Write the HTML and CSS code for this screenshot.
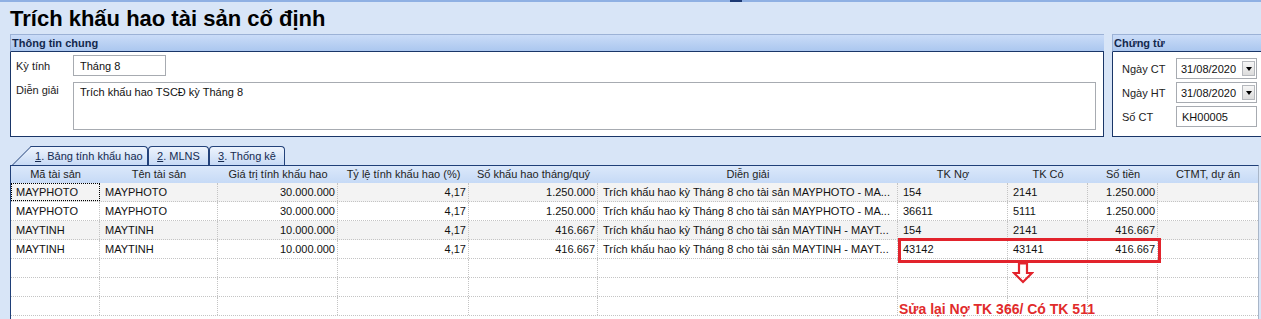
FILE: index.html
```html
<!DOCTYPE html>
<html lang="vi">
<head>
    <meta charset="UTF-8">
    <meta name="viewport" content="width=device-width, initial-scale=1.0">
    <title>Trích khấu hao tài sản cố định</title>
    <link rel="stylesheet" href="styles.css">
</head>
<body>
    <div class="topline"><span class="topmark"></span></div>
    <h1 class="title">Trích khấu hao tài sản cố định</h1>

    <div class="panels">
        <div class="panel panel-main">
            <div class="panel-head">Thông tin chung</div>
            <div class="panel-body">
                <div class="field">
                    <label>Kỳ tính</label>
                    <input class="input input-short" type="text" value="Tháng 8">
                </div>
                <div class="field field-top">
                    <label>Diễn giải</label>
                    <textarea class="input memo">Trích khấu hao TSCĐ kỳ Tháng 8</textarea>
                </div>
            </div>
        </div>

        <div class="panel panel-side">
            <div class="panel-head">Chứng từ</div>
            <div class="panel-body">
                <div class="field">
                    <label>Ngày CT</label>
                    <div class="combo">
                        <input class="bare" type="text" value="31/08/2020">
                        <span class="drop"><span class="caret"></span></span>
                    </div>
                </div>
                <div class="field">
                    <label>Ngày HT</label>
                    <div class="combo">
                        <input class="bare" type="text" value="31/08/2020">
                        <span class="drop"><span class="caret"></span></span>
                    </div>
                </div>
                <div class="field">
                    <label>Số CT</label>
                    <input class="input input-side" type="text" value="KH00005">
                </div>
            </div>
        </div>
    </div>

    <div class="tabs">
        <div class="tab tab-first"><u>1</u>. Bảng tính khẩu hao</div>
        <div class="tab tab-mlns"><u>2</u>. MLNS</div>
        <div class="tab tab-stats"><u>3</u>. Thống kê</div>
    </div>

    <div class="tabpage">
        <div class="grid-head">
            <div>Mã tài sản</div>
            <div>Tên tài sản</div>
            <div>Giá trị tính khấu hao</div>
            <div>Tỷ lệ tính khấu hao (%)</div>
            <div>Số khấu hao tháng/quý</div>
            <div>Diễn giải</div>
            <div>TK Nợ</div>
            <div>TK Có</div>
            <div>Số tiền</div>
            <div>CTMT, dự án</div>
        </div>
        <div class="grid-row alt">
            <div class="focus">MAYPHOTO</div>
            <div>MAYPHOTO</div>
            <div class="num">30.000.000</div>
            <div class="num">4,17</div>
            <div class="num">1.250.000</div>
            <div>Trích khấu hao kỳ Tháng 8 cho tài sản MAYPHOTO - MA...</div>
            <div>154</div>
            <div>2141</div>
            <div class="num">1.250.000</div>
            <div></div>
        </div>
        <div class="grid-row">
            <div>MAYPHOTO</div>
            <div>MAYPHOTO</div>
            <div class="num">30.000.000</div>
            <div class="num">4,17</div>
            <div class="num">1.250.000</div>
            <div>Trích khấu hao kỳ Tháng 8 cho tài sản MAYPHOTO - MA...</div>
            <div>36611</div>
            <div>5111</div>
            <div class="num">1.250.000</div>
            <div></div>
        </div>
        <div class="grid-row alt">
            <div>MAYTINH</div>
            <div>MAYTINH</div>
            <div class="num">10.000.000</div>
            <div class="num">4,17</div>
            <div class="num">416.667</div>
            <div>Trích khấu hao kỳ Tháng 8 cho tài sản MAYTINH - MAYT...</div>
            <div>154</div>
            <div>2141</div>
            <div class="num">416.667</div>
            <div></div>
        </div>
        <div class="grid-row">
            <div>MAYTINH</div>
            <div>MAYTINH</div>
            <div class="num">10.000.000</div>
            <div class="num">4,17</div>
            <div class="num">416.667</div>
            <div>Trích khấu hao kỳ Tháng 8 cho tài sản MAYTINH - MAYT...</div>
            <div>43142</div>
            <div>43141</div>
            <div class="num">416.667</div>
            <div></div>
        </div>
        <div class="grid-row"><div></div><div></div><div></div><div></div><div></div><div></div><div></div><div></div><div></div><div></div></div>
        <div class="grid-row"><div></div><div></div><div></div><div></div><div></div><div></div><div></div><div></div><div></div><div></div></div>
        <div class="grid-row"><div></div><div></div><div></div><div></div><div></div><div></div><div></div><div></div><div></div><div></div></div>

        <!-- annotation drawn over the grid -->
        <div class="mark-box"></div>
        <svg class="mark-arrow" width="22" height="22" viewBox="0 0 22 22">
            <path d="M7 1.5 H15 V11 H20 L11 20 L2 11 H7 Z" fill="none" stroke="#e2232c" stroke-width="2.2" stroke-linejoin="miter"/>
        </svg>
        <div class="note">Sửa lại Nợ TK 366/ Có TK 511</div>
    </div>
</body>
</html>
```

FILE: styles.css
```css
body {
    margin: 0;
    width: 1261px;
    height: 319px;
    overflow: hidden;
    background-color: #d8e5f7;
    font-family: "Liberation Sans", Arial, sans-serif;
    font-size: 11px;
    color: #1a1a1a;
}
.topline {
    height: 2px;
    background-color: #8fb0e3;
}
.topmark {
    display: block;
    margin-left: 730px;
    width: 12px;
    height: 2px;
    background-color: #1d3a74;
}
.title {
    margin: 4px 0 0 10px;
    font-size: 22px;
    line-height: 26px;
    font-weight: bold;
    color: #000;
}

/* top panels */
.panels {
    display: flex;
    gap: 8px;
    margin: 2px 0 0 10px;
}
.panel {
    height: 103px;
    display: flex;
    flex-direction: column;
    flex-shrink: 0;
}
.panel-main {
    width: 1094px;
}
.panel-side {
    width: 150px;
}
.panel-head {
    height: 18px;
    box-sizing: border-box;
    border-top: 1px solid #9cb2d6;
    border-left: 1px solid #9cb2d6;
    border-bottom: 1px solid #1a3668;
    background: linear-gradient(#cadcf8, #abc7ef);
    padding-left: 1px;
    line-height: 16px;
    font-weight: bold;
    color: #13284d;
}
.panel-body {
    flex: 1;
    background: #fff;
    border: 1px solid #1a3668;
    border-top: 0;
    display: flex;
    flex-direction: column;
}
.panel-main .panel-body {
    padding: 3px 7px 0 5px;
    gap: 6px;
}
.panel-side .panel-body {
    padding: 6px 0 0 9px;
    gap: 3px;
}
.field {
    display: flex;
    align-items: center;
}
.field label {
    width: 57px;
    flex-shrink: 0;
    color: #222;
}
.panel-side .field label {
    width: 54px;
}
.field-top {
    align-items: flex-start;
}
.field-top label {
    padding-top: 2px;
}
.input {
    box-sizing: border-box;
    height: 21px;
    border: 1px solid #a7abb1;
    background: #fff;
    padding: 0 6px;
    font-family: inherit;
    font-size: 11px;
    color: #111;
    margin: 0;
    outline: none;
}
.input-short {
    width: 93px;
}
.input-side {
    width: 81px;
    padding-left: 5px;
}
.memo {
    flex: 1;
    height: 48px;
    padding: 2px 6px;
    line-height: 14px;
    resize: none;
}
.combo {
    box-sizing: border-box;
    width: 81px;
    height: 21px;
    border: 1px solid #a7abb1;
    background: #fff;
    display: flex;
    align-items: center;
}
.bare {
    width: 0;
    flex: 1;
    border: 0;
    padding: 0 4px;
    font-family: inherit;
    font-size: 11px;
    color: #111;
    outline: none;
    background: transparent;
}
.drop {
    width: 13px;
    height: 15px;
    margin-right: 1px;
    box-sizing: border-box;
    border: 1px solid #b5b8bd;
    background: linear-gradient(#f6f6f6, #dcdcdc);
    display: flex;
    align-items: center;
    justify-content: center;
}
.caret {
    width: 0;
    height: 0;
    border-left: 3.5px solid transparent;
    border-right: 3.5px solid transparent;
    border-top: 4px solid #000;
}

/* tabs */
.tabs {
    display: flex;
    height: 19px;
    margin: 9px 0 0 10px;
}
.tab {
    box-sizing: border-box;
    border: 1px solid #23427a;
    border-bottom: 0;
    border-radius: 4px 4px 0 0;
    background: linear-gradient(#eef4fd, #c7daf5);
    line-height: 18px;
    text-align: center;
    color: #152a50;
}
.tab-first {
    position: relative;
    z-index: 0;
    margin-left: 21px;
    width: 117px;
    border-left: 0;
    border-top-left-radius: 0;
    text-align: left;
    padding-left: 4px;
}
.tab-first::before {
    content: "";
    position: absolute;
    left: -19px;
    top: -1px;
    bottom: 0;
    width: 26px;
    box-sizing: border-box;
    border-top: 1px solid #23427a;
    border-left: 1px solid #23427a;
    background: linear-gradient(#eef4fd, #c7daf5);
    transform: skewX(-45deg);
    transform-origin: 0 100%;
    z-index: -1;
}
.tab-mlns {
    width: 61px;
}
.tab-stats {
    width: 76px;
}

/* grid */
.tabpage {
    position: relative;
    margin-left: 10px;
    width: 1249px;
    height: 154px;
    overflow: hidden;
    box-sizing: border-box;
    border-left: 1px solid #1f3f78;
    border-top: 1px solid #1f3f78;
    border-right: 1px solid #a9b6c8;
    background: #fff;
}
.grid-head,
.grid-row {
    display: grid;
    grid-template-columns: 89px 118px 120px 131px 129px 300px 110px 80px 70px 100px;
}
.grid-head {
    height: 17px;
    line-height: 17px;
    background: linear-gradient(#dbe8fa, #c6daf6);
    text-align: center;
    color: #1e1e1e;
}
.grid-head > div {
    white-space: nowrap;
    overflow: hidden;
}
.grid-row {
    height: 19px;
    box-sizing: border-box;
    border-bottom: 1px dotted #c4c4c4;
    line-height: 18px;
    color: #111;
}
.grid-row.alt {
    background: #f3f3f3;
}
.grid-row > div {
    border-right: 1px dotted #c4c4c4;
    padding: 0 3px 0 5px;
    white-space: nowrap;
    overflow: hidden;
    text-overflow: ellipsis;
}
.grid-row > div:last-child {
    border-right: 0;
}
.grid-row > .num {
    text-align: right;
    padding: 0 2px 0 3px;
}
.focus {
    outline: 1px dotted #000;
    outline-offset: -1px;
}

/* annotation */
.mark-box {
    position: absolute;
    left: 887px;
    top: 72px;
    width: 263px;
    height: 25px;
    box-sizing: border-box;
    border: 3px solid #e2232c;
}
.mark-arrow {
    position: absolute;
    left: 1001px;
    top: 96px;
}
.note {
    position: absolute;
    left: 888px;
    top: 135px;
    font-size: 14px;
    line-height: 16px;
    font-weight: bold;
    color: #e12b2b;
    white-space: nowrap;
}
```
